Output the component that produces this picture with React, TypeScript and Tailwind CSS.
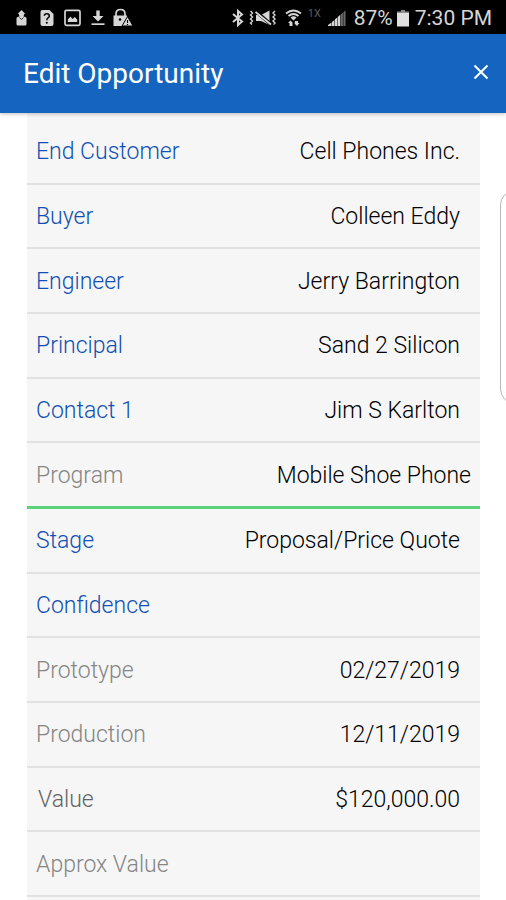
import { useState } from "react";

type Field = {
  id: string;
  label: string;
  value: string;
  kind: "picker" | "date" | "text" | "money";
};

const fields: Field[] = [
  { id: "end-customer", label: "End Customer", value: "Cell Phones Inc.", kind: "picker" },
  { id: "buyer", label: "Buyer", value: "Colleen Eddy", kind: "picker" },
  { id: "engineer", label: "Engineer", value: "Jerry Barrington", kind: "picker" },
  { id: "principal", label: "Principal", value: "Sand 2 Silicon", kind: "picker" },
  { id: "contact-1", label: "Contact 1", value: "Jim S Karlton", kind: "picker" },
  { id: "program", label: "Program", value: "Mobile Shoe Phone", kind: "text" },
  { id: "stage", label: "Stage", value: "Proposal/Price Quote", kind: "picker" },
  { id: "confidence", label: "Confidence", value: "", kind: "picker" },
  { id: "prototype", label: "Prototype", value: "02/27/2019", kind: "date" },
  { id: "production", label: "Production", value: "12/11/2019", kind: "date" },
  { id: "value", label: "Value", value: "$120,000.00", kind: "money" },
  { id: "approx-value", label: "Approx Value", value: "", kind: "date" },
];

function NotificationIcons() {
  return (
    <svg width="120" height="24" viewBox="0 0 120 24" fill="#d6d6d6" aria-hidden="true">
      {/* person with an upward arrow */}
      <path d="M6.500 4 10 7.500 9 8.500 8.500 11H4.500L4 8.500 3 7.500Z" />
      <path d="M1.500 12Q2 10.500 4.500 10.500H8.500Q11 10.500 11.500 12V18Q11.500 19.500 10 19.500H3Q1.500 19.500 1.500 18Z" />
      <path d="M4.500 11.500 6.500 13.500 8.500 11.500" fill="none" stroke="#000" strokeWidth="0.8" />
      {/* unknown SIM card */}
      <path d="M34.500 4H27.500Q25.500 4 25.500 6V18Q25.500 20 27.500 20H36.500Q38.500 20 38.500 18V8Z" />
      <path d="M29.300 9.800Q29.500 7.800 31.800 7.800 34.300 7.800 34.300 10 34.300 11.300 32.800 12.200 31.800 12.900 31.800 14.300" fill="none" stroke="#000" strokeWidth="1.500" />
      <circle cx="31.800" cy="16.700" r="1" fill="#000" />
      {/* picture */}
      <rect x="50" y="4.300" width="15" height="15" rx="1.500" fill="none" stroke="#d6d6d6" strokeWidth="1.700" />
      <path d="M52.800 16V13.500L55.500 10.500 57.500 13 59.800 11 62.200 13.500V16Z" />
      {/* download */}
      <path d="M81.300 4.500H84.700V10H88.500L83 15.500 77.500 10H81.300Z" />
      <path d="M76.500 17.300H89.500V19H76.500Z" />
      {/* padlock with a warning sign */}
      <path d="M101 10V8Q101 3.500 105.500 3.500T110 8V10" fill="none" stroke="#d6d6d6" strokeWidth="1.700" />
      <path d="M98.500 9.500H112V12L107.500 20H98.500Z" />
      <circle cx="105" cy="13.500" r="1.300" fill="#000" />
      <path d="M112.500 10.500 118 20H107Z" stroke="#000" strokeWidth="1" />
      <path d="M112.500 14V17M112.500 18V19" stroke="#000" strokeWidth="1.100" />
    </svg>
  );
}

function ConnectionIcons() {
  return (
    <svg width="76" height="24" viewBox="0 0 76 24" fill="#d6d6d6" aria-hidden="true">
      {/* Bluetooth */}
      <path d="M1 8 10 15.500 6 19V5L10 8.500 1 16" fill="none" stroke="#d6d6d6" strokeWidth="2" />
      {/* vibrate, sound off */}
      <path d="M18.500 5 20.500 7 18.500 9 20.500 11 18.500 13 20.500 15 18.500 17 20 18.500M43 5 41 7 43 9 41 11 43 13 41 15 43 17 41.500 18.500" fill="none" stroke="#d6d6d6" strokeWidth="1.400" />
      <path d="M24 9H29L37.500 4.500V19L29 15H24Z" />
      <path d="M23.500 5 39 18.500" stroke="#000" strokeWidth="3.500" />
      <path d="M23.500 6 39 18.500" stroke="#d6d6d6" strokeWidth="1.800" />
      {/* Wi-Fi with traffic arrows */}
      <path d="M54 7.500Q61.500 1.500 69 7.500M56.500 10Q61.500 6 66.500 10" fill="none" stroke="#d6d6d6" strokeWidth="2" />
      <path d="M58.500 11.500Q61.500 9 64.500 11.500L61.500 14.500Z" />
      <path d="M57.500 20V17H56L58.500 14.500 60.500 16.500V20ZM63 15H66V17H67.500L65 20 62.500 17.500Z" />
    </svg>
  );
}

function SignalIcon() {
  return (
    <svg width="18" height="24" viewBox="0 0 18 24" aria-hidden="true">
      <path d="M0 20V19L3.500 16.500V20ZM4 20V16L6.500 14V20ZM7 20V13.300L9.500 11.200V20ZM10 20V10.800L12.300 8.800V20Z" fill="#d6d6d6" />
      <path d="M12.800 20V8.500L14.900 6.800V20ZM15.400 20V6.300L17.500 4.500V20Z" fill="#686868" />
    </svg>
  );
}

function BatteryIcon() {
  return (
    <svg width="12" height="24" viewBox="0 0 12 24" aria-hidden="true">
      <path d="M4 4H8V5.500H12V8H0V5.500H4Z" fill="#8d8d8d" />
      <path d="M0 7H12V20.500H0Z" fill="#e0e0e0" />
    </svg>
  );
}

function StatusBar() {
  return (
    <div className="flex h-[34px] shrink-0 items-center justify-between bg-black pt-0.5 pr-3.5 pl-[15px] text-[#d6d6d6]">
      <NotificationIcons />
      <div className="flex items-center">
        <ConnectionIcons />
        <span className="h-6 w-5 text-[11px] leading-4 text-[#5b5b5b]">1X</span>
        <SignalIcon />
        <span className="ml-2 text-[21px] leading-6">87%</span>
        <span className="mr-1.5 ml-1">
          <BatteryIcon />
        </span>
        <span className="text-[21px] leading-6">7:30 PM</span>
      </div>
    </div>
  );
}

function FieldRow({ field }: { field: Field }) {
  const [value, setValue] = useState(field.value);

  if (field.kind === "picker") {
    return (
      <button
        type="button"
        className="flex min-h-12 w-full flex-1 items-center justify-between border-b-2 border-[#e2e2e2] pt-0.5 pr-5 pl-[9px] text-left"
      >
        <span className="text-[#1050b4]">{field.label}</span>
        <span className="text-black">{value}</span>
      </button>
    );
  }

  const focused = field.kind === "text";
  return (
    <div
      className={`flex min-h-12 flex-1 items-center justify-between pt-0.5 ${
        focused ? "border-b-3 border-[#5ad27a] pr-[9px]" : "border-b-2 border-[#e2e2e2] pr-5"
      } ${field.kind === "money" ? "pl-[11px]" : "pl-[9px]"}`}
    >
      <label
        htmlFor={field.id}
        className={`shrink-0 ${field.kind === "money" ? "text-[#636363]" : "text-[#858585]"}`}
      >
        {field.label}
      </label>
      <input
        id={field.id}
        type="text"
        value={value}
        onChange={(event) => setValue(event.target.value)}
        className="w-full min-w-0 bg-transparent text-right text-black outline-none"
      />
    </div>
  );
}

export default function App() {
  return (
    <div className="relative flex min-h-screen flex-col overflow-x-hidden bg-white font-['Roboto',sans-serif]">
      <StatusBar />
      <header className="z-10 flex h-[79px] shrink-0 items-center justify-between bg-[#1565c0] pr-[15px] pl-[23px] text-white shadow-[0_1px_4px_rgba(0,0,0,0.25)]">
        <h1 className="text-[28px] leading-8">Edit Opportunity</h1>
        <button type="button" aria-label="Close" className="flex h-8 w-5 items-center justify-center pb-1">
          <svg width="16" height="16" viewBox="0 0 16 16" fill="none" stroke="currentColor" strokeWidth="2" aria-hidden="true">
            <path d="M1.500 1.500 14.500 14.500M14.500 1.500 1.500 14.500" />
          </svg>
        </button>
      </header>
      <form className="mr-[26px] ml-[27px] flex flex-1 flex-col bg-[#f6f6f6] pt-[7px] pb-[3px] text-[23px] leading-7 font-light">
        {fields.map((field) => (
          <FieldRow key={field.id} field={field} />
        ))}
      </form>
      {/* handle of the edge panel, partly past the side of the screen */}
      <div className="absolute top-[190px] -right-6 h-[214px] w-[30px] rounded-[20px] border border-[#b8b8b8] bg-white" />
    </div>
  );
}
